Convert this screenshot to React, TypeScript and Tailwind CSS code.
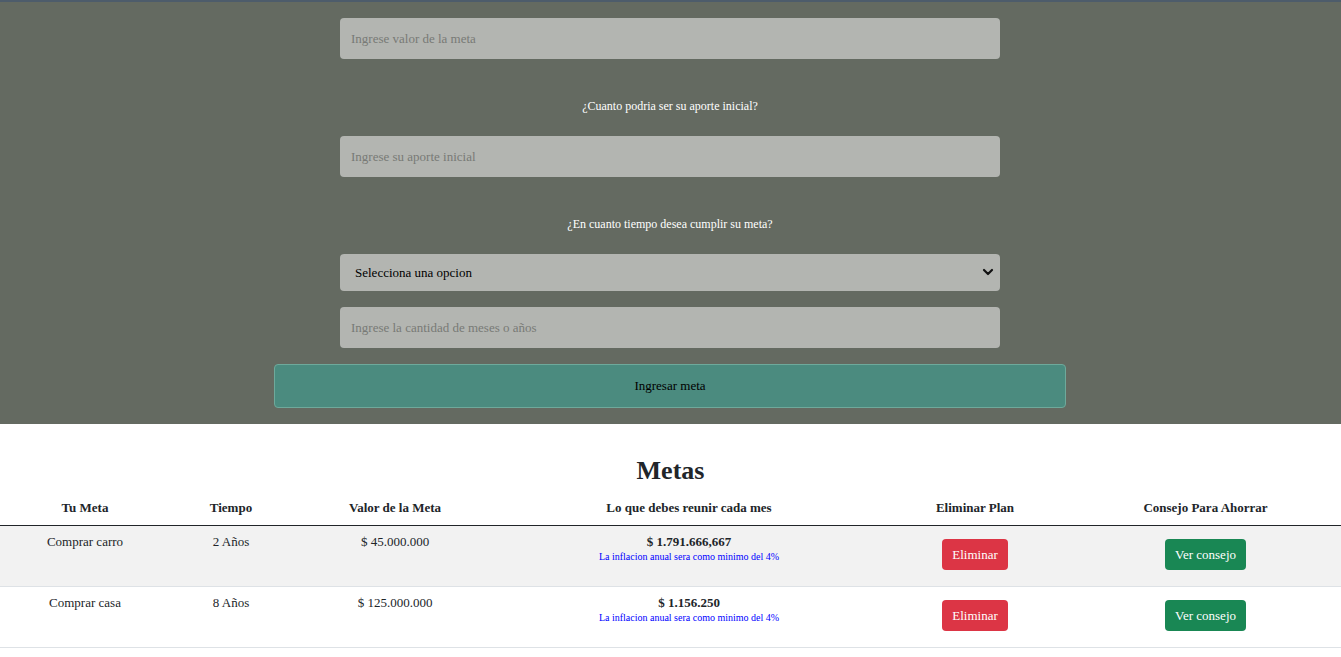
import { useState } from 'react';

type Meta = {
  nombre: string;
  tiempo: string;
  valor: string;
  mensual: string;
};

const metas: Meta[] = [
  { nombre: 'Comprar carro', tiempo: '2 Años', valor: '$ 45.000.000', mensual: '$ 1.791.666,667' },
  { nombre: 'Comprar casa', tiempo: '8 Años', valor: '$ 125.000.000', mensual: '$ 1.156.250' },
];

const serif = { fontFamily: '"Liberation Serif", "Times New Roman", serif' };

function FieldInput({ placeholder }: { placeholder: string }) {
  return (
    <input
      type="text"
      placeholder={placeholder}
      className="block h-[41px] w-[660px] rounded-[4px] bg-[#b3b5b1] px-[11px] text-[13px] text-black outline-none placeholder:text-[#787a76]"
    />
  );
}

export default function App() {
  const [plazo, setPlazo] = useState('');

  return (
    <div style={serif} className="min-h-screen bg-white text-[13px] text-[#212529]">
      <section className="flex flex-col items-center border-t-2 border-[#4d5c6b] bg-[#646a61] pb-4 pr-px pt-4">
        <FieldInput placeholder="Ingrese valor de la meta" />

        <p className="mb-[23px] mt-[40px] h-[14px] text-[12px] leading-[14px] text-white">
          ¿Cuanto podria ser su aporte inicial?
        </p>
        <FieldInput placeholder="Ingrese su aporte inicial" />

        <p className="mb-[23px] mt-[40px] h-[14px] text-[12px] leading-[14px] text-white">
          ¿En cuanto tiempo desea cumplir su meta?
        </p>
        <div className="relative w-[660px]">
          <select
            value={plazo}
            onChange={(e) => setPlazo(e.target.value)}
            className="block h-[37px] w-full appearance-none rounded-[4px] bg-[#b3b5b1] pl-[15px] pr-9 text-[13px] text-black outline-none"
          >
            <option value="">Selecciona una opcion</option>
            <option value="meses">Meses</option>
            <option value="anios">Años</option>
          </select>
          <svg
            className="pointer-events-none absolute right-[6px] top-[13px]"
            width="12"
            height="10"
            viewBox="0 0 12 10"
            fill="none"
          >
            <path d="M2 3l4 4 4-4" stroke="#111" strokeWidth="2.2" strokeLinecap="round" strokeLinejoin="round" />
          </svg>
        </div>

        <div className="mt-4">
          <FieldInput placeholder="Ingrese la cantidad de meses o años" />
        </div>

        <button
          type="button"
          className="mt-4 h-[44px] w-[792px] rounded-[4px] border border-[#6ea99b] bg-[#4b8b7f] text-[13px] text-black"
        >
          Ingresar meta
        </button>
      </section>

      <section>
        <h2 className="mt-[31px] text-center text-[26px] font-bold leading-[31px] text-[#212529]">Metas</h2>

        <table className="mt-[9px] w-full border-collapse text-center">
          <colgroup>
            <col className="w-[170px]" />
            <col className="w-[122px]" />
            <col className="w-[206px]" />
            <col className="w-[382px]" />
            <col className="w-[190px]" />
            <col />
          </colgroup>
          <thead>
            <tr className="border-b border-[#212529]">
              {['Tu Meta', 'Tiempo', 'Valor de la Meta', 'Lo que debes reunir cada mes', 'Eliminar Plan', 'Consejo Para Ahorrar'].map(
                (h) => (
                  <th key={h} className="px-2 pb-[9px] pt-[5px] text-[13px] font-bold leading-[16px]">
                    {h}
                  </th>
                ),
              )}
            </tr>
          </thead>
          <tbody>
            {metas.map((m, i) => (
              <tr key={m.nombre} className={`border-b border-[#dee2e6] ${i === 0 ? 'bg-[#f2f2f2]' : 'bg-white'}`}>
                <td className="h-[61px] px-2 pt-2 align-top leading-[16px]">{m.nombre}</td>
                <td className="px-2 pt-2 align-top leading-[16px]">{m.tiempo}</td>
                <td className="px-2 pt-2 align-top leading-[16px]">{m.valor}</td>
                <td className="px-2 pt-2 align-top">
                  <div className="font-bold leading-[16px]">{m.mensual}</div>
                  <div className="mt-[1px] text-[10px] leading-[12px] text-[#0000ff]">
                    La inflacion anual sera como minimo del 4%
                  </div>
                </td>
                <td className="px-2 pt-[13px] align-top">
                  <button type="button" className="h-[31px] w-[66px] rounded-[4px] bg-[#dc3545] text-[13px] text-white">
                    Eliminar
                  </button>
                </td>
                <td className="px-2 pt-[13px] align-top">
                  <button type="button" className="h-[31px] w-[81px] rounded-[4px] bg-[#198754] text-[13px] text-white">
                    Ver consejo
                  </button>
                </td>
              </tr>
            ))}
          </tbody>
        </table>
      </section>
    </div>
  );
}
